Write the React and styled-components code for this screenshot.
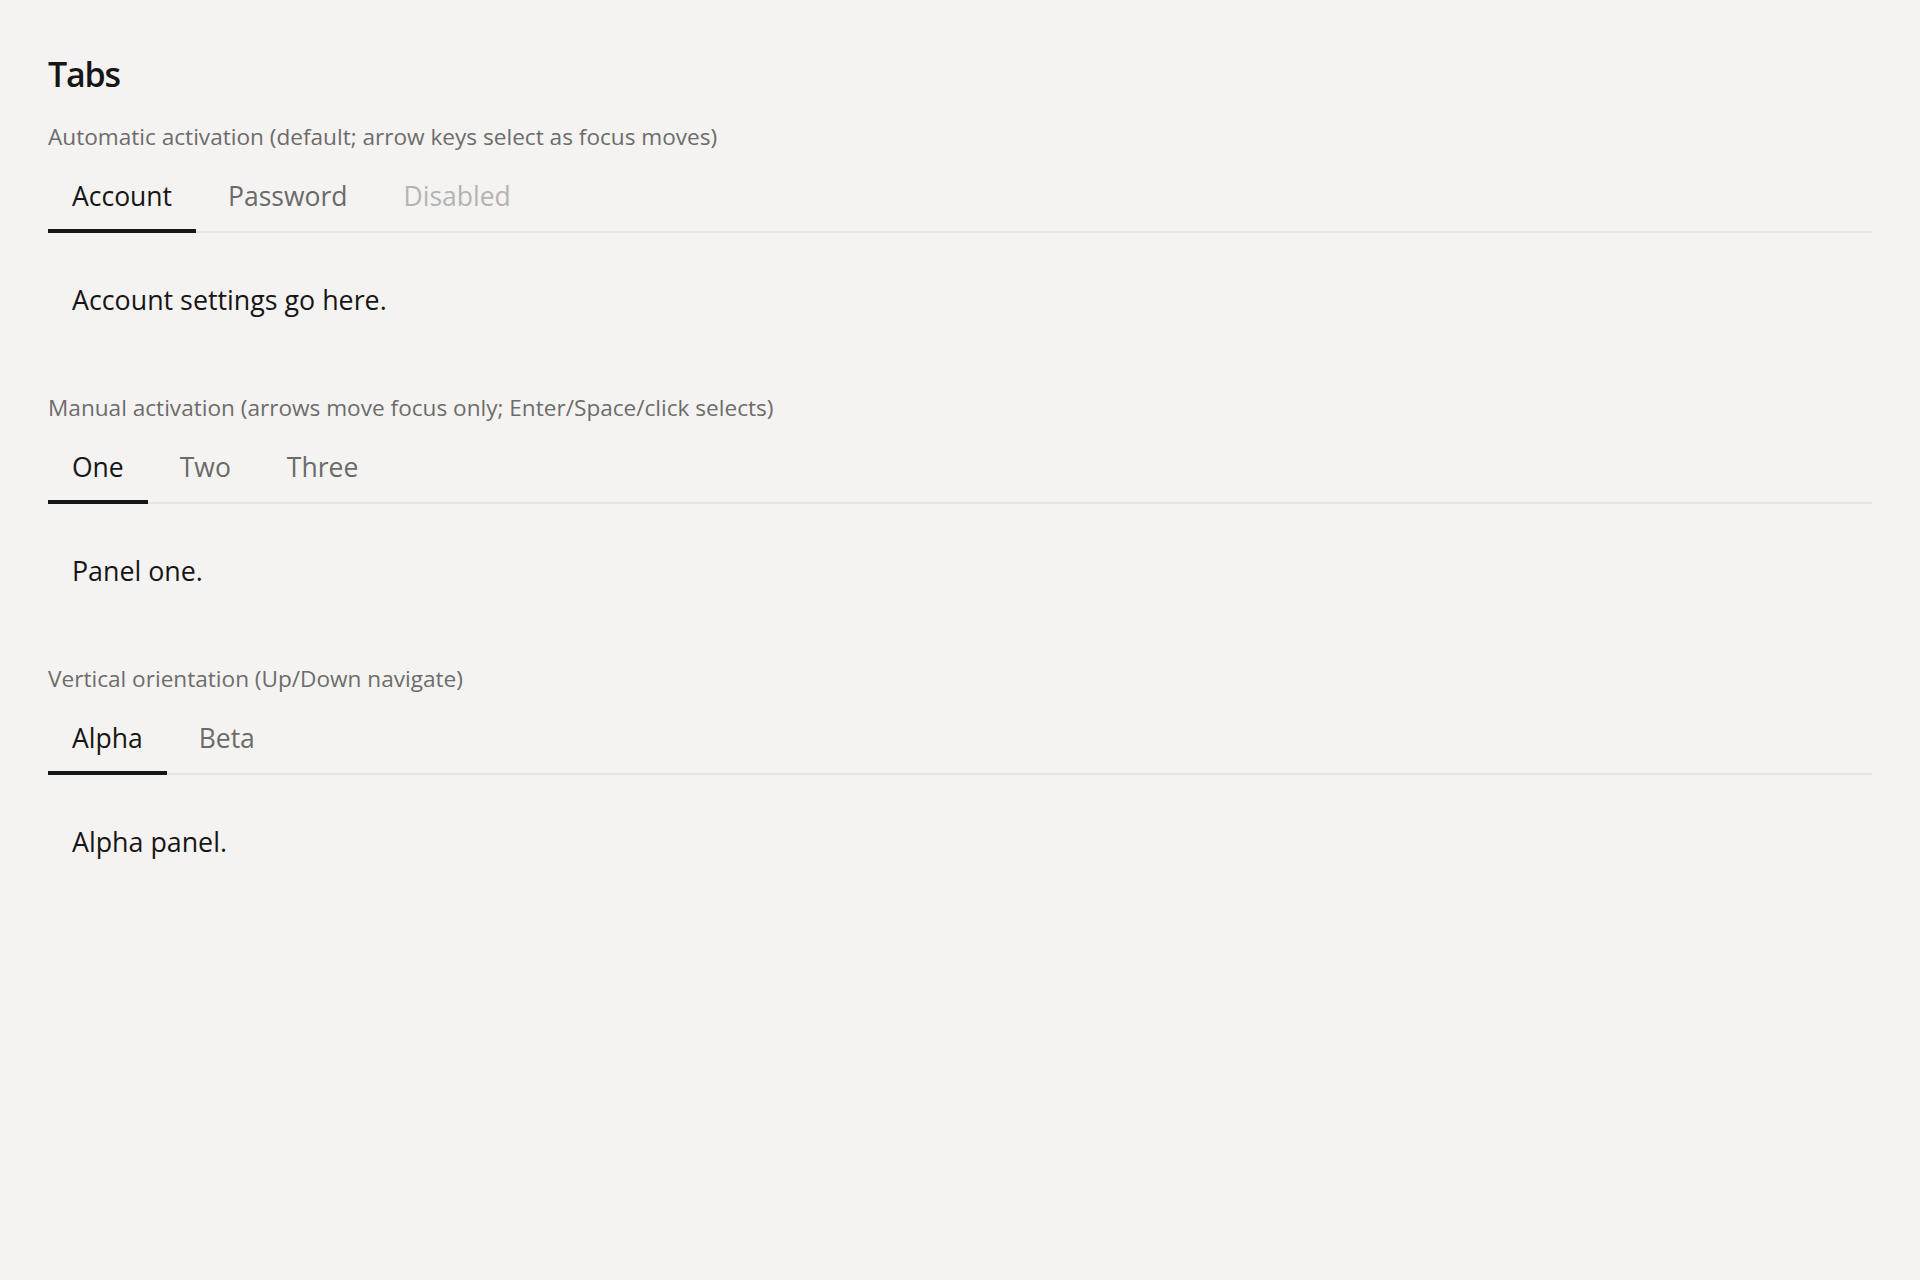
import React, {useState} from "react";
import styled, {createGlobalStyle} from "styled-components";

const GlobalStyle = createGlobalStyle`
  html, body {
    margin: 0;
    background: #f4f3f1;
  }
  body {
    font-family: "Segoe UI", "Open Sans", "Noto Sans", sans-serif;
    color: #161616;
  }
`;

const Page = styled.main`
  padding: 52px 48px;
`;

const Title = styled.h1`
  margin: 0 0 26px;
  font-size: 34px;
  font-weight: 600;
  letter-spacing: -1.2px;
  line-height: 44px;
`;

const Section = styled.section`
  margin-bottom: 40px;
`;

const Caption = styled.div`
  font-size: 22.6px;
  line-height: 30px;
  color: #6d6c6b;
  margin-bottom: 17px;
`;

const TabList = styled.div`
  display: flex;
  gap: 8px;
  border-bottom: 2px solid #e6e4e1;
`;

const Tab = styled.button`
  font-family: inherit;
  font-size: 26.5px;
  line-height: 34px;
  padding: 10px 24px 16px;
  margin-bottom: -2px;
  background: none;
  border: none;
  border-bottom: 4px solid ${p => (p.$active ? "#161616" : "transparent")};
  color: ${p => (p.$disabled ? "#b4b3b2" : p.$active ? "#161616" : "#6b6a69")};
  cursor: ${p => (p.$disabled ? "default" : "pointer")};
`;

const Panel = styled.div`
  padding: 50px 24px 36px;
  font-size: 26.8px;
  line-height: 34px;
`;

const Tabs = ({caption, tabs}) => {
  const [current, setCurrent] = useState(tabs[0].id);
  const active = tabs.find(t => t.id === current);
  return (
    <Section>
      <Caption>{caption}</Caption>
      <TabList role="tablist">
        {tabs.map(t => (
          <Tab key={t.id} role="tab" $active={t.id === current} $disabled={t.disabled}
               disabled={t.disabled} onClick={() => setCurrent(t.id)}>
            {t.label}
          </Tab>
        ))}
      </TabList>
      <Panel role="tabpanel">{active.content}</Panel>
    </Section>
  );
};

const App = () => (
  <>
    <GlobalStyle/>
    <Page>
      <Title>Tabs</Title>
      <Tabs caption="Automatic activation (default; arrow keys select as focus moves)" tabs={[
        {id: "account", label: "Account", content: "Account settings go here."},
        {id: "password", label: "Password", content: "Password settings go here."},
        {id: "disabled", label: "Disabled", content: "", disabled: true},
      ]}/>
      <Tabs caption="Manual activation (arrows move focus only; Enter/Space/click selects)" tabs={[
        {id: "one", label: "One", content: "Panel one."},
        {id: "two", label: "Two", content: "Panel two."},
        {id: "three", label: "Three", content: "Panel three."},
      ]}/>
      <Tabs caption="Vertical orientation (Up/Down navigate)" tabs={[
        {id: "alpha", label: "Alpha", content: "Alpha panel."},
        {id: "beta", label: "Beta", content: "Beta panel."},
      ]}/>
    </Page>
  </>
);

export default App;
